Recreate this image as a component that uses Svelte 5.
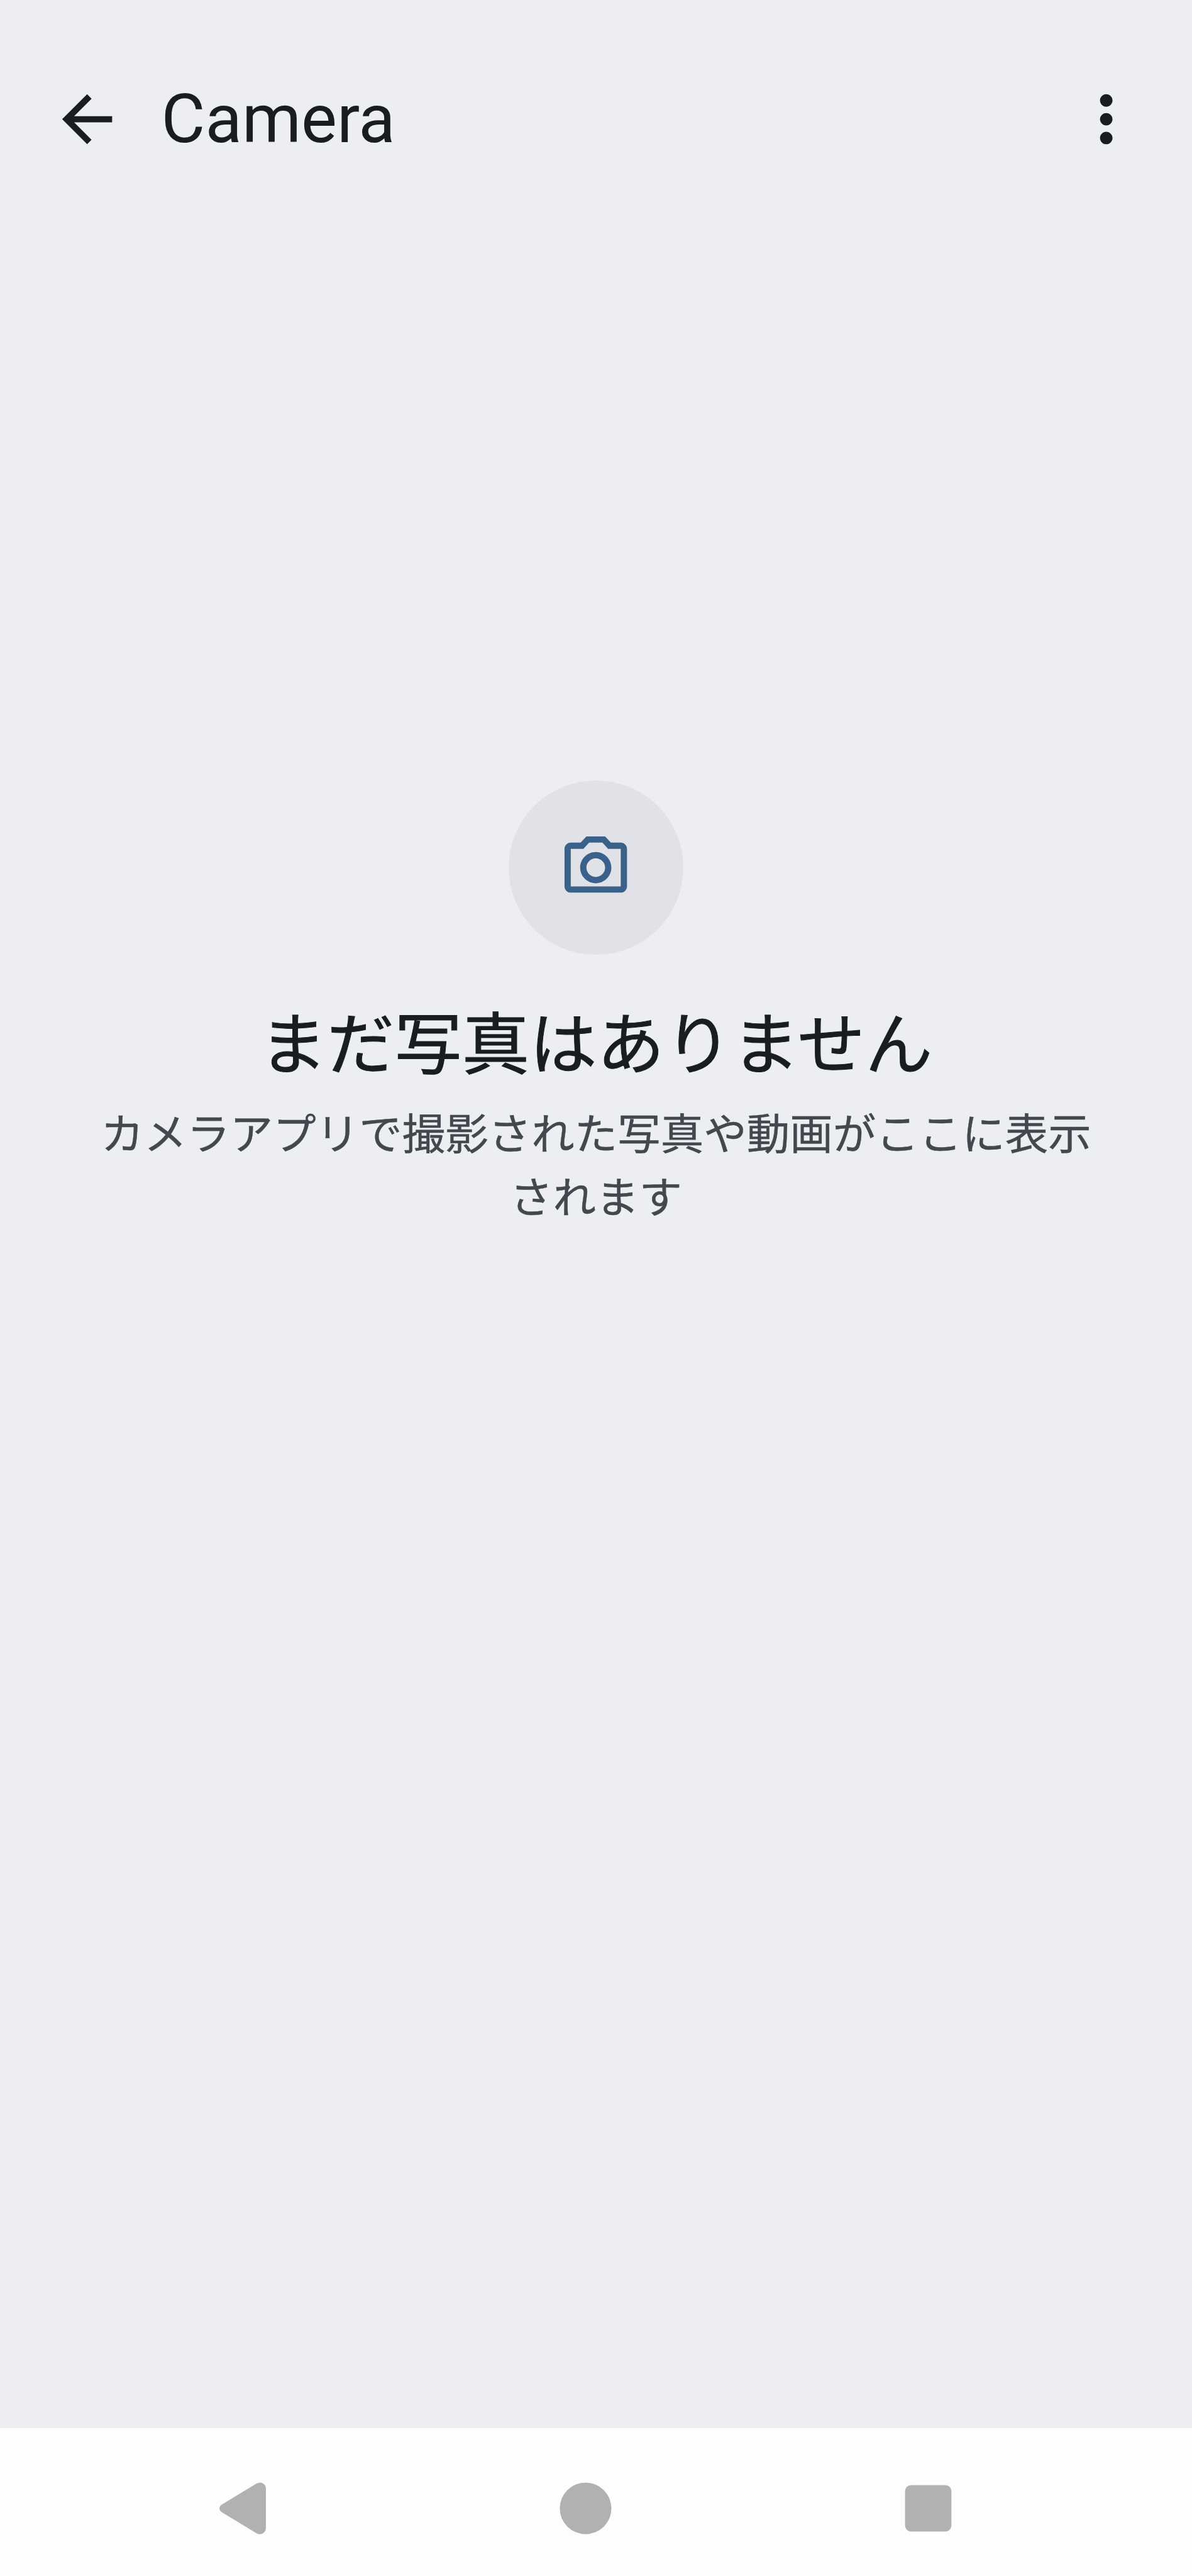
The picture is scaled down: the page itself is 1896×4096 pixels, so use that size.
<script>
  const title = 'Camera';
  const heading = 'まだ写真はありません';
  const message = 'カメラアプリで撮影された写真や動画がここに表示されます';
</script>

<div class="screen">
  <header class="app-bar">
    <button class="icon-button" aria-label="Back">
      <svg viewBox="0 0 24 24"><path d="M20 11H7.83l5.59-5.59L12 4l-8 8 8 8 1.41-1.41L7.83 13H20v-2z" /></svg>
    </button>
    <h1>{title}</h1>
    <button class="icon-button" aria-label="More options">
      <svg viewBox="0 0 24 24"><path d="M12 8c1.1 0 2-.9 2-2s-.9-2-2-2-2 .9-2 2 .9 2 2 2zm0 2c-1.1 0-2 .9-2 2s.9 2 2 2 2-.9 2-2-.9-2-2-2zm0 6c-1.1 0-2 .9-2 2s.9 2 2 2 2-.9 2-2-.9-2-2-2z" /></svg>
    </button>
  </header>

  <main class="empty">
    <div class="badge">
      <svg viewBox="0 0 24 24"><path d="M14.12 4l1.83 2H20v12H4V6h4.05l1.83-2h4.24M15 2H9L7.17 4H4c-1.1 0-2 .9-2 2v12c0 1.1.9 2 2 2h16c1.1 0 2-.9 2-2V6c0-1.1-.9-2-2-2h-3.17L15 2zm-3 7c1.65 0 3 1.35 3 3s-1.35 3-3 3-3-1.35-3-3 1.35-3 3-3m0-2c-2.76 0-5 2.24-5 5s2.24 5 5 5 5-2.24 5-5-2.24-5-5-5z" /></svg>
    </div>
    <h2>{heading}</h2>
    <p>{message}</p>
  </main>

  <nav class="system-nav">
    <button aria-label="Back">
      <svg viewBox="0 0 120 120"><path d="M89 6.700Q94.500 3.600 100 5.200Q109.300 8.200 109.300 18V102Q109.300 111.800 100 114.800Q94.500 116.400 89 113.300L15.500 68.800Q9.500 65.200 9.500 60Q9.500 54.800 15.500 51.200Z" /></svg>
    </button>
    <button aria-label="Home">
      <svg viewBox="0 0 120 120"><circle cx="60" cy="60" r="55.400" /></svg>
    </button>
    <button aria-label="Recents">
      <svg viewBox="0 0 120 120"><rect x="10.200" y="10.200" width="99.600" height="99.600" rx="13" /></svg>
    </button>
  </nav>
</div>

<style>
  :global(body) {
    margin: 0;
    background: #edeef2;
  }

  .screen {
    --u: calc(100vw / 2560);
    box-sizing: border-box;
    width: 100vw;
    height: 100vh;
    display: flex;
    flex-direction: column;
    overflow: hidden;
    background: #edeef2;
    color: #191c20;
    font-family: Roboto, 'Noto Sans CJK JP', sans-serif;
  }

  button {
    display: block;
    flex: none;
    padding: 0;
    border: 0;
    background: none;
    color: inherit;
  }

  svg {
    display: block;
    width: 100%;
    height: 100%;
    fill: currentColor;
  }

  .app-bar {
    flex: none;
    display: flex;
    align-items: center;
    height: calc(512 * var(--u));
    padding: 0 calc(104 * var(--u)) 0 calc(107 * var(--u));
    box-sizing: border-box;
  }

  .icon-button {
    width: calc(161 * var(--u));
    height: calc(161 * var(--u));
  }

  h1 {
    flex: 1;
    margin: 0;
    padding-left: calc(78.500 * var(--u));
    font-size: calc(145 * var(--u));
    line-height: calc(186 * var(--u));
    font-weight: 400;
  }

  .empty {
    flex: 1;
    display: flex;
    flex-direction: column;
    align-items: center;
    padding-top: calc(1163 * var(--u));
    text-align: center;
    font-family: 'Noto Sans CJK JP', sans-serif;
  }

  .badge {
    flex: none;
    display: grid;
    place-items: center;
    width: calc(374.500 * var(--u));
    height: calc(374.500 * var(--u));
    border-radius: 50%;
    background: #e1e2e7;
    color: #3a618a;
  }

  .badge svg {
    width: calc(161 * var(--u));
    height: calc(161 * var(--u));
  }

  h2 {
    margin: calc(87 * var(--u)) 0 0;
    font-size: calc(145 * var(--u));
    line-height: calc(190 * var(--u));
    font-weight: 400;
    -webkit-text-stroke: calc(1.300 * var(--u)) currentColor;
  }

  p {
    width: calc(2160 * var(--u));
    margin: calc(35.500 * var(--u)) 0 0;
    color: #43474e;
    font-size: calc(92.500 * var(--u));
    line-height: calc(135.300 * var(--u));
    -webkit-text-stroke: calc(0.600 * var(--u)) currentColor;
  }

  .system-nav {
    flex: none;
    display: flex;
    align-items: center;
    gap: calc(616 * var(--u));
    height: calc(317.500 * var(--u));
    padding: calc(28 * var(--u)) 0 0 calc(462 * var(--u));
    box-sizing: border-box;
    background: #fdfdfd;
    color: #b1b1b1;
  }

  .system-nav button {
    width: calc(120 * var(--u));
    height: calc(120 * var(--u));
  }
</style>
